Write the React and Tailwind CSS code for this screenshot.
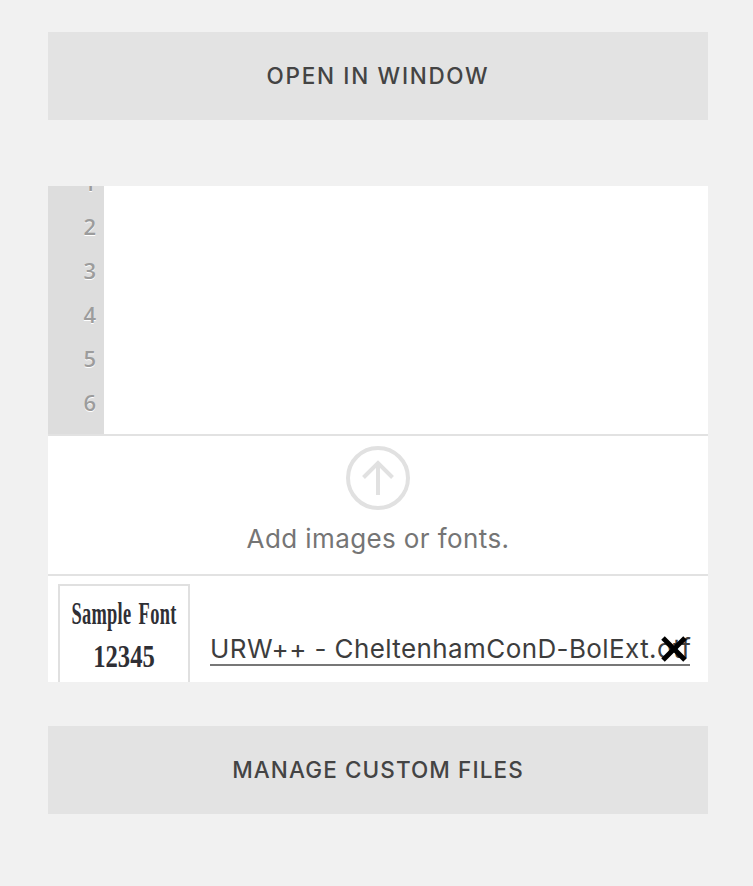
import React from "react";

const font = { fontFamily: '"Inter", "Liberation Sans", sans-serif' };

const ActionButton = ({ label, className }) => (
  <button className={`flex h-[88px] w-full items-center justify-center bg-[#e3e3e3] text-[22.5px] font-medium text-[#444] ${className}`}>
    {label}
  </button>
);

const App = () => {
  return (
    <div style={font} className="h-[886px] overflow-hidden bg-[#f1f1f1] pt-8 pl-12 pr-[45px]">
      <ActionButton label="OPEN IN WINDOW" className="tracking-[1.7px]" />

      <div className="mt-[66px] bg-white">
        {/* Editor */}
        <div className="h-[248px] overflow-hidden">
          <div className="h-full w-14 overflow-hidden bg-[#dddddd]">
            <div className="-mt-[26px] pr-2 text-right font-['Open_Sans'] text-[22px] font-semibold leading-[44px] text-[#9c9c9c] [text-shadow:0_1px_0_#fff]">
              {[1, 2, 3, 4, 5, 6].map((n) => (
                <div key={n}>{n}</div>
              ))}
            </div>
          </div>
        </div>

        {/* Upload */}
        <div className="flex h-[142px] flex-col items-center border-y-2 border-[#e2e2e2]">
          <svg className="mt-[10px]" width="64" height="64" viewBox="0 0 64 64" fill="none" stroke="#e1e1e1" strokeWidth="4">
            <circle cx="32" cy="32" r="30" />
            <path d="M32 49V17M17.500 31.500L32 17L46.500 31.500" />
          </svg>
          <div className="mt-[13px] text-[26px] leading-8 tracking-[0.4px] text-[#757575]">Add images or fonts.</div>
        </div>

        {/* File row */}
        <div className="flex h-[106px] overflow-hidden pt-2 pl-[10px]">
          <div className="h-[120px] w-[132px] shrink-0 border-2 border-[#e0e0e0] font-['Liberation_Serif'] font-bold text-[#2f2f35]">
            <div className="mt-[11px] flex scale-x-[0.575] justify-center whitespace-nowrap text-[32px] leading-8 tracking-[0.5px] [word-spacing:4px]">
              Sample Font
            </div>
            <div className="mt-[11px] scale-x-[0.77] text-center text-[32px] leading-8">12345</div>
          </div>
          <div className="relative ml-5 mt-[44px] h-[38px] w-[480px] border-b-2 border-[#777] text-[26px] leading-[42px] tracking-[0.4px] whitespace-nowrap text-[#3d3d3d]">
            URW++ - CheltenhamConD-BolExt.otf
            <svg className="absolute right-[1px] top-[6px]" width="30" height="30" viewBox="0 0 30 30" fill="none" stroke="#000" strokeWidth="5">
              <path d="M4 4L26 26M26 4L4 26" />
            </svg>
          </div>
        </div>
      </div>

      <div className="mt-11">
        <ActionButton label="MANAGE CUSTOM FILES" className="tracking-[1.1px]" />
      </div>
    </div>
  );
};

export default App;
